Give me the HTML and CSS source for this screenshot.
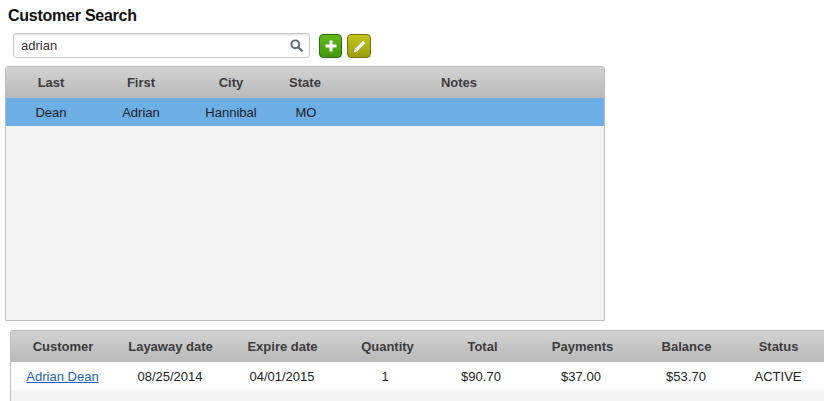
FILE: index.html
```html
<!DOCTYPE html>
<html lang="en">
<head>
<meta charset="utf-8">
<title>Customer Search</title>
<link rel="stylesheet" href="styles.css">
</head>
<body>
<h1 class="title">Customer Search</h1>
<div class="toolbar">
  <div class="search">
    <span class="search-text">adrian</span>
    <svg class="search-icon" width="13" height="13" viewBox="0 0 13 13"><circle cx="5.3" cy="5.3" r="3.9" fill="none" stroke="#5a6672" stroke-width="1.9"/><path d="M8.2 8.2l3.6 3.6" stroke="#5a6672" stroke-width="2.3" stroke-linecap="round"/></svg>
  </div>
  <div class="btn btn-green"><svg width="14" height="14" viewBox="0 0 14 14"><path d="M5.500 1.500h3v4h4v3h-4v4h-3v-4h-4v-3h4z" fill="#fff"/></svg></div>
  <div class="btn btn-olive"><svg width="17" height="17" viewBox="0 0 17 17"><path d="M12 2.500l2.700 2.700-8.600 8.600-3.900 1 1.200-3.700z" fill="#fff" stroke="#8d8f12" stroke-width=".5"/><path d="M4.200 11l1.900 1.900" stroke="#b9bb70" stroke-width=".9"/></svg></div>
</div>
<section class="grid-panel customers">
  <div class="head cust-cols"><span>Last</span><span>First</span><span>City</span><span>State</span><span>Notes</span></div>
  <div class="row selected cust-cols"><span>Dean</span><span>Adrian</span><span>Hannibal</span><span class="nudge-r">MO</span><span></span></div>
</section>
<section class="grid-panel layaways">
  <div class="head lay-cols"><span>Customer</span><span>Layaway date</span><span>Expire date</span><span>Quantity</span><span>Total</span><span>Payments</span><span>Balance</span><span>Status</span></div>
  <div class="row white lay-cols"><span><a href="#">Adrian Dean</a></span><span>08/25/2014</span><span>04/01/2015</span><span class="qty">1</span><span class="num">$90.70</span><span class="num">$37.00</span><span>$53.70</span><span>ACTIVE</span></div>
</section>
</body>
</html>
```
FILE: styles.css
```css
html, body { margin: 0; padding: 0; height: 401px; overflow: hidden; background: #fff; }
body { font-family: "Liberation Sans", Arial, sans-serif; font-size: 13px; color: #222; }
.title { margin: 0; padding: 7px 0 0 8px; font-size: 16px; line-height: 18px; font-weight: bold; color: #111; letter-spacing: -0.25px; }
.toolbar { display: flex; align-items: flex-start; margin: 8px 0 0 13px; height: 25px; }
.search { box-sizing: border-box; width: 297px; height: 25px; display: flex; align-items: center; justify-content: space-between; padding: 0 6px 0 7px; background: #fff; border: 1px solid #c8c8c8; border-radius: 3px; box-shadow: inset 0 1px 2px #ddd; }
.search-text { color: #333; }
.search-icon { display: block; }
.btn { box-sizing: border-box; width: 23px; height: 24px; margin-top: 1px; display: flex; align-items: center; justify-content: center; border-radius: 4px; }
.btn-green { margin-left: 9px; border: 1px solid #2f6b10; background: linear-gradient(#62b81a, #43990e); }
.btn-olive { margin-left: 5px; width: 24px; border: 1px solid #73750c; background: linear-gradient(#c4c61c, #9c9e0c); }
.grid-panel { box-sizing: border-box; background: #f4f4f4; overflow: hidden; }
.customers { width: 600px; height: 255px; margin: 8px 0 0 5px; border: 1px solid #bdbdbd; border-radius: 3px 3px 0 0; }
.layaways { width: 814px; height: 71px; margin: 9px 0 0 10px; border-top: 1px solid #bdbdbd; border-left: 1px solid #bdbdbd; border-radius: 3px 0 0 0; }
.head { height: 31px; align-items: center; font-weight: bold; color: #3c3c3c; background: linear-gradient(#d2d2d2, #b9b9b9); }
.row { height: 28px; align-items: center; color: #222; }
.selected { background: #6cafe6; }
.white { background: #fff; }
.cust-cols { display: grid; grid-template-columns: 90px 90px 90px 58px 250px; }
.lay-cols { display: grid; grid-template-columns: 103px 112px 112px 98px 92px 108px 100px 84px; }
.head span, .row span { text-align: center; white-space: nowrap; }
.lay-cols.head span { padding-left: 1px; }
.row .nudge-r { padding-left: 2px; }
.row .qty { padding-right: 4px; }
.row .num { padding-right: 2px; }
a { color: #1c5fb5; }
```
